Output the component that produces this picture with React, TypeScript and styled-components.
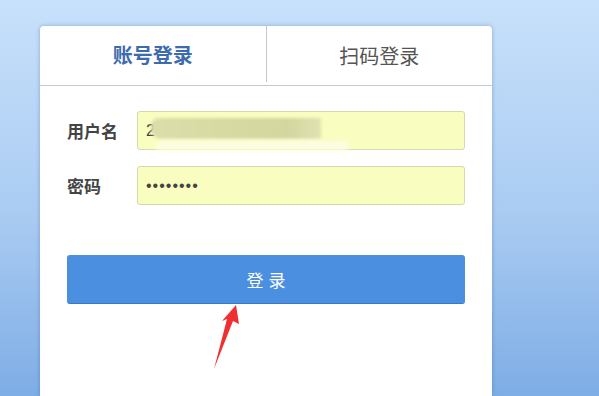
import React from 'react';
import styled, { createGlobalStyle } from 'styled-components';

const GlobalStyle = createGlobalStyle`
    html, body {
        margin: 0;
        padding: 0;
        height: 100%;
        overflow: hidden;
    }
    body {
        background: linear-gradient(180deg, #c8e1fb 0%, #a9cbf2 55%, #7eade5 100%);
        font-family: "Noto Sans CJK SC", "Noto Sans", sans-serif;
    }
`;

const Page = styled.div`
    position: relative;
    height: 396px;
    padding: 26px 0 0 40px;
    box-sizing: border-box;
    overflow: hidden;
`;

const Card = styled.div`
    width: 452px;
    height: 370px;
    background-color: #fff;
    border-radius: 4px 4px 0 0;
    box-shadow: 0 0 4px rgba(40, 70, 120, 0.35);
    display: flex;
    flex-direction: column;
`;

const Tabs = styled.div`
    display: flex;
    height: 59px;
    border-bottom: 1px solid #c3cad4;
`;

const Tab = styled.div<{ $active?: boolean; $divider?: boolean }>`
    flex: 1;
    display: flex;
    align-items: center;
    justify-content: center;
    margin-bottom: ${({ $divider }) => ($divider ? '3px' : '0')};
    border-right: ${({ $divider }) => ($divider ? '1px solid #c3cad4' : 'none')};
    font-size: 20px;
    font-weight: ${({ $active }) => ($active ? 700 : 400)};
    color: ${({ $active }) => ($active ? '#3d6cae' : '#555')};
`;

const Form = styled.div`
    display: flex;
    flex-direction: column;
    padding: 25px 27px 0;
    gap: 16px;
`;

const Row = styled.div`
    display: flex;
    align-items: center;
`;

const Label = styled.label`
    width: 70px;
    font-size: 17px;
    font-weight: 700;
    color: #444;
`;

const FieldWrap = styled.div`
    position: relative;
    flex: 1;
`;

const Input = styled.input`
    display: block;
    width: 100%;
    height: 39px;
    box-sizing: border-box;
    padding: 0 8px;
    border: 1px solid #d6d8b0;
    border-radius: 3px;
    background-color: #fafdc0;
    font-family: "Liberation Sans", "Noto Sans CJK SC", sans-serif;
    font-size: 16px;
    color: #444;
    outline: none;
    letter-spacing: 1px;
`;

const Smudge = styled.div`
    position: absolute;
    left: 14px;
    top: 7px;
    width: 170px;
    height: 21px;
    background: linear-gradient(90deg, #dcdea9 0%, #d9dca6 20%, #d6d9a2 50%, #d4d69f 80%, #e0e2b2 100%);
    filter: blur(1.5px);
    border-radius: 8px 2px 2px 10px;
`;

const SmudgeLow = styled.div`
    position: absolute;
    left: 18px;
    top: 30px;
    width: 195px;
    height: 10px;
    background: #fbfde0;
    filter: blur(2px);
    border-radius: 8px;
`;

const SubmitButton = styled.button`
    margin: 50px 27px 0;
    height: 49px;
    border: none;
    border-bottom: 1px solid #3b79c6;
    border-radius: 3px;
    background-color: #4a8fe0;
    color: #fff;
    font-family: "Noto Sans CJK SC", sans-serif;
    font-size: 17px;
    letter-spacing: 5px;
    text-indent: 5px;
    cursor: pointer;
`;

const Arrow = styled.svg`
    position: absolute;
    left: 0;
    top: 0;
    pointer-events: none;
`;

export default function App() {
    return (
        <>
            <GlobalStyle />
            <Page>
                <Card>
                    <Tabs>
                        <Tab $active $divider>账号登录</Tab>
                        <Tab>扫码登录</Tab>
                    </Tabs>
                    <Form>
                        <Row>
                            <Label>用户名</Label>
                            <FieldWrap>
                                <Input type='text' value='2' readOnly />
                                <Smudge />
                                <SmudgeLow />
                            </FieldWrap>
                        </Row>
                        <Row>
                            <Label>密码</Label>
                            <FieldWrap>
                                <Input type='password' value='12345678' readOnly />
                            </FieldWrap>
                        </Row>
                    </Form>
                    <SubmitButton>登录</SubmitButton>
                </Card>
                <Arrow width='599' height='396' viewBox='0 0 599 396'>
                    <polygon
                        points='236,305 239,324 233,321 214,369 227,319 222,321'
                        fill='#f03030'
                    />
                </Arrow>
            </Page>
        </>
    );
}
